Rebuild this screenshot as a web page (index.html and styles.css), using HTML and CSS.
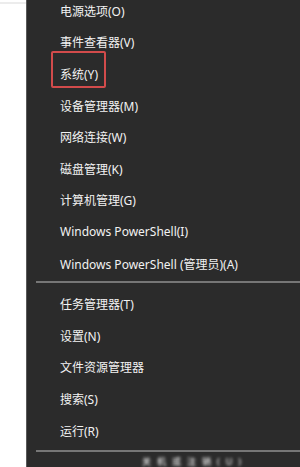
FILE: index.html
```html
<!DOCTYPE html>
<html lang="zh-CN">
<head>
<meta charset="utf-8">
<title>Win+X 菜单</title>
<link rel="stylesheet" href="styles.css">
</head>
<body>
<div class="screen">
  <div class="desk"><div class="desk-line"></div></div>
  <div class="menu">
    <ul class="group first">
      <li class="item">电源选项(O)</li>
      <li class="item">事件查看器(V)</li>
      <li class="item"><span class="mark">系统(Y)</span></li>
      <li class="item">设备管理器(M)</li>
      <li class="item">网络连接(W)</li>
      <li class="item">磁盘管理(K)</li>
      <li class="item">计算机管理(G)</li>
      <li class="item">Windows PowerShell(I)</li>
      <li class="item">Windows PowerShell (管理员)(A)</li>
    </ul>
    <div class="sep"></div>
    <ul class="group">
      <li class="item">任务管理器(T)</li>
      <li class="item">设置(N)</li>
      <li class="item">文件资源管理器</li>
      <li class="item">搜索(S)</li>
      <li class="item">运行(R)</li>
    </ul>
    <div class="sep sep2"></div>
    <div class="blurred">关机或注销(U)</div>
  </div>
</div>
</body>
</html>
```
FILE: styles.css
```css
html, body {
  margin: 0;
  padding: 0;
  background: #ffffff;
  overflow: hidden;
}
.screen {
  display: flex;
  width: 300px;
  height: 467px;
  overflow: hidden;
  font-family: "Noto Sans", "Noto Sans CJK SC", sans-serif;
  font-size: 12px;
}
.desk {
  width: 26px;
  flex: none;
  background: #ffffff;
}
.desk-line {
  height: 2px;
  margin-top: 2px;
  background: #ececec;
}
.menu {
  flex: 1;
  background: #2b2b2b;
  border-left: 1px solid #5a5a5a;
  display: flex;
  flex-direction: column;
  overflow: hidden;
}
.group {
  list-style: none;
  margin: 0;
  padding: 0;
}
.group.first {
  margin-top: -5px;
}
.item {
  height: 31.6px;
  display: flex;
  align-items: center;
  padding-left: 33px;
  color: #f2f2f2;
  white-space: nowrap;
}
.mark {
  position: relative;
}
.mark::after {
  content: "";
  position: absolute;
  left: -9px;
  right: -8px;
  top: -14px;
  bottom: -5px;
  border: 2px solid #d24b4b;
  border-radius: 2px;
}
.sep {
  height: 2px;
  background: #767676;
  margin: 2px 0 5px 9px;
}
.sep2 {
  margin-top: 4px;
  margin-bottom: 5px;
}
.blurred {
  padding-left: 115px;
  color: #ffffff;
  font-size: 9px;
  line-height: 9px;
  height: 9px;
  letter-spacing: 6px;
  filter: blur(1.4px);
  white-space: nowrap;
}
```
